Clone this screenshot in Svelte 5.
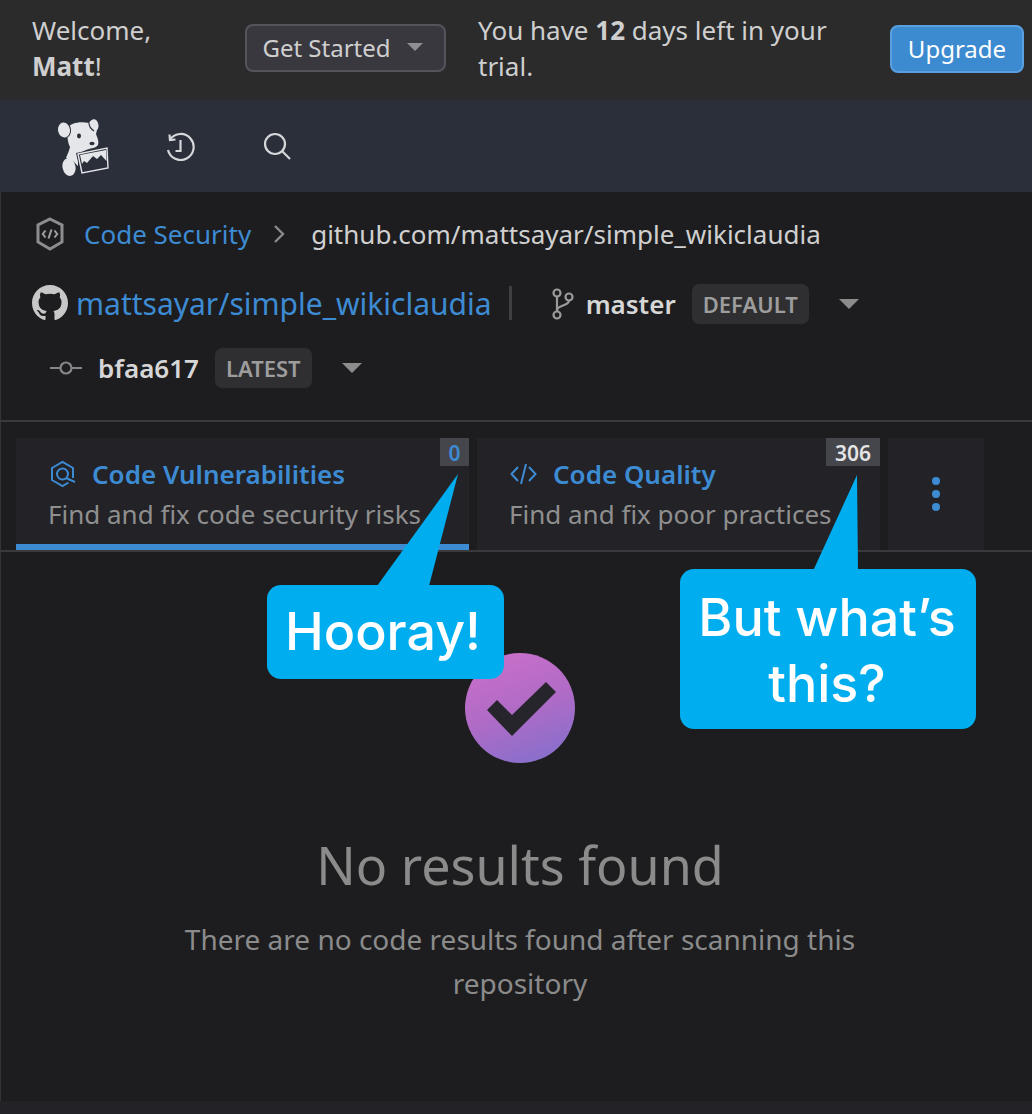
<script>
	const tabs = [
		{ title: 'Code Vulnerabilities', desc: 'Find and fix code security risks', count: 0, active: true, icon: 'vuln' },
		{ title: 'Code Quality', desc: 'Find and fix poor practices', count: 306, active: false, icon: 'code' }
	];
</script>

<div class="page">
	<header class="trial">
		<div class="welcome">Welcome,<br /><b>Matt</b>!</div>
		<button class="started">Get Started <span class="caret"></span></button>
		<div class="days">You have <b>12</b> days left in your trial.</div>
		<button class="upgrade">Upgrade</button>
	</header>

	<nav class="nav">
		<svg class="dog" viewBox="56 114 56 62" width="56" height="62" aria-hidden="true">
			<g fill="#e4e6e9">
				<path d="M68 127C70 122 80 120 89 122 91 118 95 117 97 120 99 123 99 127 97 129L96 133C98 138 99 141 98 144 95 148 90 147 86 149L80 152 76 156C72 158 72 152 70 146 67 140 67 132 68 127z" />
				<path d="M70 146 78 152 78 165 73 160 66 157C68 152 69 150 70 146z" />
				<ellipse cx="69" cy="166" rx="6.5" ry="9" transform="rotate(-12 69 166)" />
				<ellipse cx="64" cy="129" rx="6.5" ry="8" transform="rotate(-10 64 129)" stroke="#2a2f3a" stroke-width="1" />
			</g>
			<path fill="none" stroke="#2a2f3a" stroke-width="1.2" d="M89 122c0 3 2 6 5 8" />
			<ellipse cx="79" cy="135" rx="2" ry="2.4" fill="#2a2f3a" />
			<ellipse cx="92" cy="142.5" rx="2.6" ry="1.8" fill="#2a2f3a" />
			<path fill="#2a2f3a" d="M76 152 109 145 110 169 81 174z" />
			<path fill="none" stroke="#e4e6e9" stroke-width="1.4" d="M78 153 107 147 108 167 82 172z" />
			<path fill="#e4e6e9" d="M80 154 106 149 106.5 160 101 154 97 158 93 155 87 162 84 160 82 163z" />
		</svg>
		<svg class="nav-icon" viewBox="0 0 30 30" width="30" height="30" aria-hidden="true">
			<path d="M5 8.5A13 13 0 1 1 3 19" />
			<path d="M4.5 3.5 5 9l5.5-.5" />
			<path d="M15.5 9v11h-5" />
		</svg>
		<svg class="nav-icon" viewBox="0 0 30 30" width="30" height="30" aria-hidden="true">
			<circle cx="13" cy="13" r="10" />
			<path d="M20 20l8 8" />
		</svg>
	</nav>

	<section class="crumbs">
		<div class="crumb-row">
			<svg class="shield" viewBox="0 0 28 34" width="28" height="34" aria-hidden="true">
				<path d="M14 2 26 8V25L14 32 2 25V8z" />
				<path class="thin" d="M9.5 13.5 6.8 17l2.7 3.5M18.5 13.5l2.7 3.5-2.7 3.5M15.5 12.5l-3 9" />
			</svg>
			<a class="link">Code Security</a>
			<svg class="chev" viewBox="0 0 12 20" width="12" height="20" aria-hidden="true"><path d="M2 2l8 8-8 8" /></svg>
			<span class="path">github.com/mattsayar/simple_wikiclaudia</span>
		</div>

		<div class="repo-row">
			<svg class="gh" viewBox="0 0 16 16" width="36" height="36" aria-hidden="true">
				<path d="M8 0C3.58 0 0 3.58 0 8c0 3.54 2.29 6.53 5.47 7.59.4.07.55-.17.55-.38 0-.19-.01-.82-.01-1.49-2.01.37-2.53-.49-2.69-.94-.09-.23-.48-.94-.82-1.13-.28-.15-.68-.52-.01-.53.63-.01 1.08.58 1.23.82.72 1.21 1.87.87 2.33.66.07-.52.28-.87.51-1.07-1.78-.2-3.64-.89-3.64-3.95 0-.87.31-1.59.82-2.15-.08-.2-.36-1.02.08-2.12 0 0 .67-.21 2.2.82.64-.18 1.32-.27 2-.27s1.36.09 2 .27c1.53-1.04 2.2-.82 2.2-.82.44 1.1.16 1.92.08 2.12.51.56.82 1.27.82 2.15 0 3.07-1.87 3.75-3.65 3.95.29.25.54.73.54 1.48 0 1.07-.01 1.93-.01 2.2 0 .21.15.46.55.38A8.01 8.01 0 0 0 16 8c0-4.42-3.58-8-8-8z" />
			</svg>
			<a class="link repo">mattsayar/simple_wikiclaudia</a>
			<span class="divider"></span>
			<svg class="branch" viewBox="0 0 26 34" width="26" height="34" aria-hidden="true">
				<circle cx="8" cy="6" r="3.5" />
				<circle cx="8" cy="28" r="3.5" />
				<circle cx="20" cy="10" r="3.5" />
				<path d="M8 9.5v15M20 13.5c0 6-12 4-12 10" />
			</svg>
			<b class="ref">master</b>
			<span class="tag">DEFAULT</span>
			<span class="caret big"></span>
		</div>

		<div class="commit-row">
			<svg class="commit" viewBox="0 0 32 14" width="32" height="14" aria-hidden="true">
				<circle cx="16" cy="7" r="5.5" />
				<path d="M0 7h10M22 7h10" />
			</svg>
			<b class="ref">bfaa617</b>
			<span class="tag">LATEST</span>
			<span class="caret big"></span>
		</div>
	</section>

	<div class="tabs">
		{#each tabs as tab}
			<div class="tab" class:active={tab.active}>
				<span class="count" class:zero={tab.count === 0}>{tab.count}</span>
				<div class="tab-title">
					{#if tab.icon === 'vuln'}
						<svg class="tab-icon" viewBox="0 0 26 28" width="26" height="28" aria-hidden="true">
							<path d="M23 18V8L12.5 2 2 8v12l10.5 6 6-3.5" />
							<circle cx="12.5" cy="14" r="5.5" />
							<path d="M16 18l9 4" />
						</svg>
					{:else}
						<svg class="tab-icon code" viewBox="0 0 27 24" width="27" height="24" aria-hidden="true">
							<path d="M8 5 1.5 12 8 19M19 5l6.5 7-6.5 7M16 2l-5 20" />
						</svg>
					{/if}
					<span>{tab.title}</span>
				</div>
				<div class="tab-desc">{tab.desc}</div>
			</div>
		{/each}
		<div class="tab more">
			<i></i><i></i><i></i>
		</div>
	</div>

	<main class="empty">
		<div class="badge">
			<svg viewBox="0 0 110 110" width="110" height="110" aria-hidden="true">
				<polygon points="22,57 32,47 47,62 81,29 91,39 47,83" fill="#26252c" />
			</svg>
		</div>
		<h2>No results found</h2>
		<p>There are no code results found after scanning this repository</p>
	</main>

	<div class="strip"></div>

	<div class="callout hooray">
		<svg class="tail" viewBox="0 0 90 115" width="90" height="115" aria-hidden="true"><polygon points="0,112 81,0 52,112" /></svg>
		Hooray!
	</div>
	<div class="callout what">
		<svg class="tail" viewBox="0 0 50 96" width="50" height="96" aria-hidden="true"><polygon points="0,96 44,0 45,96" /></svg>
		But what’s this?
	</div>
</div>

<style>
	:global(body) {
		margin: 0;
		background: #1d1d1f;
	}

	.page {
		position: relative;
		display: flex;
		flex-direction: column;
		width: 1032px;
		height: 1114px;
		overflow: hidden;
		background: #1d1d1f;
		color: #c7c7c7;
		font-family: 'Noto Sans', 'Open Sans', sans-serif;
		box-shadow: inset 1px 0 0 #343437;
	}

	button {
		font-family: inherit;
		cursor: pointer;
	}

	b {
		font-weight: 700;
	}

	.trial {
		display: flex;
		align-items: center;
		flex: none;
		height: 100px;
		box-sizing: border-box;
		padding: 0 8px 4px 32px;
		background: #2b2b2c;
		font-size: 26px;
		line-height: 36px;
		color: #cfcfcf;
	}

	.welcome {
		width: 213px;
		flex: none;
	}

	.started {
		flex: none;
		display: flex;
		align-items: center;
		justify-content: center;
		gap: 16px;
		width: 201px;
		height: 48px;
		margin-right: 32px;
		padding: 0 6px 2px 0;
		border: 2px solid #55535c;
		border-radius: 8px;
		background: #3a383f;
		color: #cfcfcf;
		font-size: 24px;
	}

	.caret {
		display: inline-block;
		width: 0;
		height: 0;
		border-left: 8px solid transparent;
		border-right: 8px solid transparent;
		border-top: 8px solid #8f8f93;
	}

	.caret.big {
		border-left-width: 10px;
		border-right-width: 10px;
		border-top-width: 10px;
		border-top-color: #8c8c8c;
	}

	.days {
		flex: 1;
		padding-right: 40px;
	}

	.upgrade {
		flex: none;
		width: 134px;
		height: 48px;
		margin-top: 2px;
		padding: 0 0 2px;
		border: 2px solid #5a9fe0;
		border-radius: 8px;
		background: #3c8ad0;
		color: #fff;
		font-size: 24px;
	}

	.nav {
		display: flex;
		align-items: center;
		flex: none;
		height: 92px;
		padding-left: 56px;
		background: #2a2f3a;
	}

	.dog {
		margin-right: 53px;
	}

	.nav-icon {
		margin-right: 67px;
		fill: none;
		stroke: #d5d7da;
		stroke-width: 2.2;
	}

	.crumbs {
		flex: none;
		height: 230px;
		box-sizing: border-box;
		padding: 23px 0 0 32px;
		border-bottom: 2px solid #3a3a3d;
	}

	.crumb-row {
		display: flex;
		align-items: center;
		height: 38px;
		padding-left: 4px;
	}

	.shield {
		margin-right: 20px;
		fill: none;
		stroke: #8d8d8f;
		stroke-width: 3;
	}

	.shield .thin {
		stroke-width: 2;
		stroke: #a0a0a2;
	}

	.link {
		color: #3d8bd3;
	}

	.crumb-row .link {
		font-size: 26px;
	}

	.chev {
		margin: 0 26px 0 22px;
		fill: none;
		stroke: #8a8a8a;
		stroke-width: 2.4;
	}

	.path {
		font-size: 26px;
		color: #d0d0d0;
	}

	.repo-row {
		display: flex;
		align-items: center;
		height: 44px;
		margin-top: 29px;
	}

	.gh {
		fill: #c8c8c8;
		margin: 0 8px 2px 0;
	}

	.repo {
		margin-bottom: 2px;
		font-size: 30px;
	}

	.divider {
		width: 3px;
		height: 34px;
		margin: 0 37px 2px 17px;
		background: #3f3f42;
	}

	.branch {
		margin-right: 11px;
		fill: none;
		stroke: #9a9a9a;
		stroke-width: 2.2;
	}

	.ref {
		font-size: 26px;
		font-weight: 600;
		color: #d6d6d6;
	}

	.tag {
		display: inline-flex;
		align-items: center;
		height: 40px;
		margin: 0 30px 0 16px;
		padding: 0 11px;
		border-radius: 7px;
		background: #2f2f31;
		color: #9d9d9d;
		font-size: 22px;
		font-weight: 600;
	}

	.commit-row {
		display: flex;
		align-items: center;
		height: 44px;
		margin-top: 20px;
		padding-left: 18px;
	}

	.commit {
		margin-right: 16px;
		fill: none;
		stroke: #858585;
		stroke-width: 2.2;
	}

	.tabs {
		display: flex;
		flex: none;
		gap: 8px;
		height: 130px;
		box-sizing: border-box;
		padding: 16px 0 0 16px;
		border-bottom: 2px solid #3a3a3d;
	}

	.tab {
		position: relative;
		box-sizing: border-box;
		width: 403px;
		height: 112px;
		padding: 16px 0 0 32px;
		background: #222227;
	}

	.tab.active {
		width: 453px;
		border-bottom: 6px solid #3d8bd3;
	}

	.tab.more {
		display: flex;
		flex-direction: column;
		align-items: center;
		justify-content: center;
		gap: 5px;
		width: 96px;
		padding: 0;
	}

	.tab.more i {
		width: 8px;
		height: 8px;
		border-radius: 50%;
		background: #3d8bd3;
	}

	.count {
		position: absolute;
		top: 0;
		right: 0;
		min-width: 29px;
		height: 28px;
		box-sizing: border-box;
		padding: 0 9px;
		background: #45454c;
		color: #e4e4e4;
		font-size: 21px;
		font-weight: 600;
		line-height: 30px;
		text-align: center;
	}

	.count.zero {
		padding: 0 6px;
		color: #3d8bd3;
	}

	.tab-title {
		display: flex;
		align-items: center;
		gap: 16px;
		height: 40px;
		color: #3d8bd3;
		font-size: 26px;
		font-weight: 600;
	}

	.tab-icon {
		fill: none;
		stroke: #3d8bd3;
		stroke-width: 2;
		margin-left: 2px;
	}

	.tab-icon.code {
		margin-left: 1px;
	}

	.tab-desc {
		margin-top: 2px;
		color: #8f8f8f;
		font-size: 26px;
		line-height: 36px;
	}

	.empty {
		display: flex;
		flex: 1;
		flex-direction: column;
		align-items: center;
		padding: 101px 0 0 8px;
		text-align: center;
	}

	.badge {
		width: 110px;
		height: 110px;
		border-radius: 50%;
		background: linear-gradient(160deg, #c76fc9 10%, #b06bc6 50%, #7f70cd 100%);
	}

	.badge svg {
		display: block;
	}

	h2 {
		margin: 67px 0 0;
		color: #8b8b8b;
		font-size: 52px;
		font-weight: 400;
		line-height: 70px;
	}

	p {
		width: 700px;
		margin: 17px 0 0;
		color: #8b8b8b;
		font-size: 28px;
		line-height: 44px;
	}

	.strip {
		flex: none;
		height: 13px;
		background: #222227;
	}

	.callout {
		position: absolute;
		border-radius: 14px;
		background: #00aeef;
		color: #fff;
		font-family: Inter, sans-serif;
		font-size: 52px;
		font-weight: 500;
		line-height: 66px;
		text-align: center;
		box-sizing: border-box;
	}

	.tail {
		position: absolute;
		fill: #00aeef;
	}

	.hooray {
		left: 267px;
		top: 585px;
		width: 237px;
		height: 94px;
		padding: 14px 5px 0 0;
	}

	.hooray .tail {
		left: 110px;
		top: -111px;
	}

	.what {
		left: 680px;
		top: 569px;
		width: 296px;
		height: 160px;
		padding: 16px 12px 0 10px;
	}

	.what .tail {
		left: 133px;
		top: -94px;
	}
</style>
